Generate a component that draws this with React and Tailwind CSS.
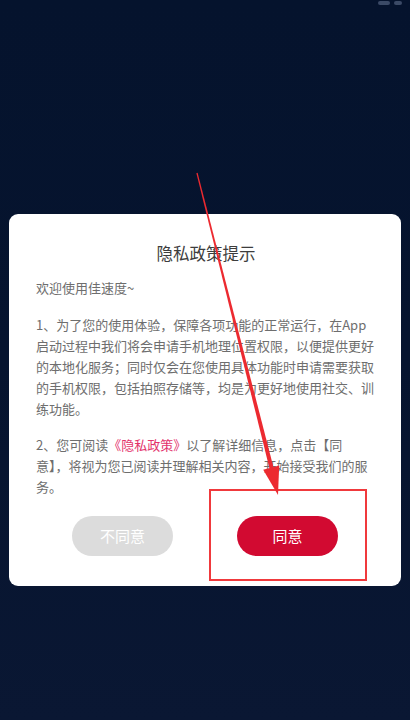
import React from "react";

const font = { fontFamily: '"Noto Sans CJK SC", "Noto Sans", sans-serif' };

const Annotation = () => (
  <>
    <div className="absolute left-[209px] top-[489px] w-[158px] h-[92px] border-2 border-[#f0393c]" />
    <svg className="absolute inset-0 pointer-events-none" width="410" height="720" viewBox="0 0 410 720">
      <polygon points="196.4,173.2 197.6,172.8 273.5,467.5 269.5,468.5" fill="#ec2a30" />
      <polygon points="278,495 279.2,465.6 263.2,469.8" fill="#ec2a30" />
    </svg>
  </>
);

export default function App() {
  return (
    <div className="relative w-[410px] h-[720px] overflow-hidden bg-gradient-to-b from-[#05132d] via-[#06142f] to-[#0a1733]" style={font}>
      <div className="flex justify-end gap-1 pr-[8px] pt-[1px]">
        <div className="w-[12px] h-[4px] rounded-sm bg-[#3b4a66]" />
        <div className="w-[8px] h-[4px] rounded-sm bg-[#3b4a66]" />
      </div>

      <div className="mt-[209px] mx-[9px] bg-white rounded-[9px] pl-[27px] pr-[25px] pt-[27px] pb-[30px]">
        <h1 className="text-center text-[16.5px] leading-[24px] text-[#3d3d3d]">隐私政策提示</h1>

        <div className="mt-[12px] text-[13px] leading-[21px] text-[#6e6e6e]">
          <p>欢迎使用佳速度~</p>
          <p className="mt-[16px]">
            1、为了您的使用体验，保障各项功能的正常运行，在App启动过程中我们将会申请手机地理位置权限，以便提供更好的本地化服务；同时仅会在您使用具体功能时申请需要获取的手机权限，包括拍照存储等，均是为更好地使用社交、训练功能。
          </p>
          <p className="mt-[15px]">
            2、您可阅读<span className="text-[#e3336b]">《隐私政策》</span>以了解详细信息，点击【同
            <br />
            意】，将视为您已阅读并理解相关内容，开始接受我们的服务。
          </p>
        </div>

        <div className="mt-[19px] flex justify-center gap-[64px] -ml-[2px]">
          <button className="w-[101px] h-[40px] rounded-full bg-[#dcdcdc] text-white text-[15px]">不同意</button>
          <button className="w-[101px] h-[40px] rounded-full bg-[#d20a31] text-white text-[15px]">同意</button>
        </div>
      </div>

      <Annotation />
    </div>
  );
}
